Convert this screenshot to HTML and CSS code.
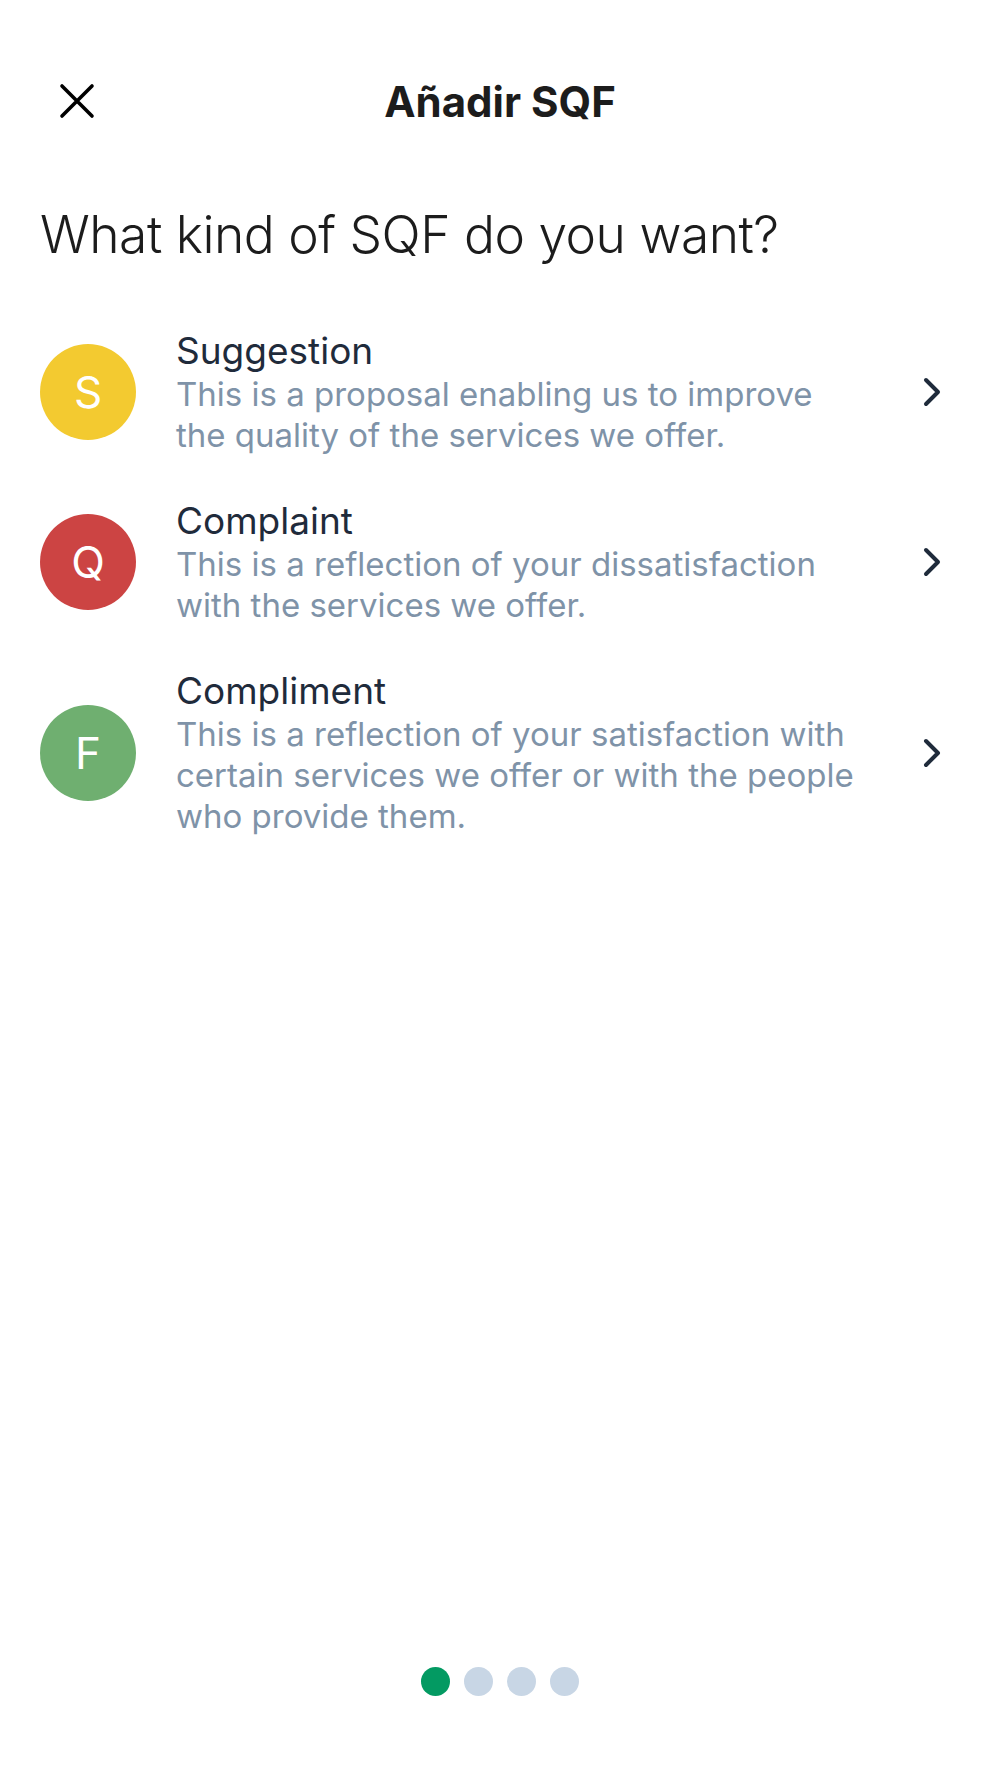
FILE: index.html
```html
<!DOCTYPE html>
<html lang="en">
<head>
    <meta charset="UTF-8">
    <title>Añadir SQF</title>
    <link rel="stylesheet" href="styles.css">
</head>
<body>

<div class="screen">
    <header class="topbar">
        <button class="close" id="close" aria-label="Close">
            <svg width="36" height="36" viewBox="0 0 36 36">
                <path d="M3 3 L33 33 M33 3 L3 33" stroke="#000" stroke-width="3.6" stroke-linecap="round" fill="none"/>
            </svg>
        </button>
        <h1 class="title">Añadir SQF</h1>
    </header>

    <h2 class="question">What kind of SQF do you want?</h2>

    <ul class="kinds">
        <li class="kind">
            <span class="badge suggestion">S</span>
            <div class="kind-text">
                <div class="kind-name">Suggestion</div>
                <p class="kind-desc">This is a proposal enabling us to improve the quality of the services we offer.</p>
            </div>
            <svg class="chevron" width="20" height="30" viewBox="0 0 20 30">
                <path d="M4 3 L16 15 L4 27" stroke="#1f2b3b" stroke-width="4" stroke-linecap="round" stroke-linejoin="round" fill="none"/>
            </svg>
        </li>
        <li class="kind">
            <span class="badge complaint">Q</span>
            <div class="kind-text">
                <div class="kind-name">Complaint</div>
                <p class="kind-desc">This is a reflection of your dissatisfaction with the services we offer.</p>
            </div>
            <svg class="chevron" width="20" height="30" viewBox="0 0 20 30">
                <path d="M4 3 L16 15 L4 27" stroke="#1f2b3b" stroke-width="4" stroke-linecap="round" stroke-linejoin="round" fill="none"/>
            </svg>
        </li>
        <li class="kind">
            <span class="badge compliment">F</span>
            <div class="kind-text">
                <div class="kind-name">Compliment</div>
                <p class="kind-desc">This is a reflection of your satisfaction with certain services we offer or with the people who provide them.</p>
            </div>
            <svg class="chevron" width="20" height="30" viewBox="0 0 20 30">
                <path d="M4 3 L16 15 L4 27" stroke="#1f2b3b" stroke-width="4" stroke-linecap="round" stroke-linejoin="round" fill="none"/>
            </svg>
        </li>
    </ul>

    <div class="steps">
        <span class="dot active"></span>
        <span class="dot"></span>
        <span class="dot"></span>
        <span class="dot"></span>
    </div>
</div>

</body>
</html>
```

FILE: styles.css
```css
body {
    margin: 0;
    background: #fff;
    font-family: Inter, "Open Sans", sans-serif;
    color: #1f2b3b;
}
.screen {
    min-height: 1778px;
    display: flex;
    flex-direction: column;
    box-sizing: border-box;
    padding: 0 40px;
}
.topbar {
    position: relative;
    display: flex;
    align-items: center;
    justify-content: center;
    padding-top: 77px;
}
.close {
    position: absolute;
    left: 19px;
    top: 83px;
    background: none;
    border: none;
    padding: 0;
    cursor: pointer;
}
.title {
    margin: 0;
    font-size: 42px;
    font-weight: 700;
    line-height: 50px;
    color: #1c1c1c;
}
.question {
    margin: 75px 0 0;
    font-size: 51.5px;
    font-weight: 300;
    line-height: 64px;
    color: #1c1c1c;
    letter-spacing: -0.5px;
}
.kinds {
    list-style: none;
    margin: 62px 0 0;
    padding: 0;
    display: flex;
    flex-direction: column;
    gap: 42px;
}
.kind {
    display: flex;
    align-items: center;
    cursor: pointer;
}
.badge {
    flex: none;
    width: 96px;
    height: 96px;
    border-radius: 50%;
    display: flex;
    align-items: center;
    justify-content: center;
    color: #fff;
    font-size: 44px;
    font-weight: 400;
}
.suggestion {
    background: #f3ca30;
}
.complaint {
    background: #cc4443;
}
.compliment {
    background: #6faf70;
}
.kind-text {
    flex: 1;
    margin-left: 40px;
    max-width: 678px;
}
.kind-name {
    font-size: 37px;
    line-height: 46px;
}
.kind-desc {
    margin: 0;
    font-size: 33px;
    line-height: 41px;
    color: #7f93a8;
}
.chevron {
    margin-left: auto;
    margin-right: 18px;
}
.steps {
    margin-top: auto;
    margin-bottom: 82px;
    display: flex;
    justify-content: center;
    gap: 14px;
}
.dot {
    width: 29px;
    height: 29px;
    border-radius: 50%;
    background: #c8d6e5;
}
.dot.active {
    background: #039a62;
}
```
